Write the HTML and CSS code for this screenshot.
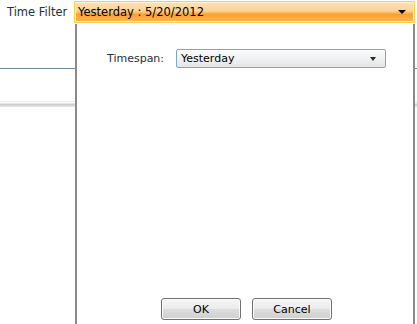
FILE: index.html
```html
<!DOCTYPE html>
<html lang="en">
<head>
    <meta charset="UTF-8">
    <title>Time Filter</title>
    <link rel="stylesheet" href="styles.css">
</head>
<body>
    <div class="topbar">
        <div class="label">Time Filter</div>
        <div class="filter-combo">
            <span>Yesterday : 5/20/2012</span>
            <span class="arrow"></span>
        </div>
    </div>

    <div class="backdrop">
        <div class="rule"></div>
        <div class="splitter"></div>
    </div>

    <!-- dropdown panel -->
    <div class="popup">
        <div class="form-row">
            <span class="form-label">Timespan:</span>
            <div class="combo">
                <span>Yesterday</span>
                <span class="arrow small"></span>
            </div>
        </div>
        <div class="button-group">
            <button class="btn">OK</button>
            <button class="btn">Cancel</button>
        </div>
    </div>
</body>
</html>
```

FILE: styles.css
```css
body {
    margin: 0;
    font-family: "DejaVu Sans", "Liberation Sans", sans-serif;
    font-size: 11px;
    color: #1e1e1e;
    background: #fff;
    height: 324px;
    overflow: hidden;
    position: relative;
}
.topbar {
    display: flex;
    align-items: center;
    height: 24px;
}
.label {
    width: 74px;
    padding-left: 7px;
    box-sizing: border-box;
    color: #1e3140;
    font-size: 11.5px;
}
.filter-combo {
    width: 341px;
    height: 22px;
    box-sizing: border-box;
    border: 1px solid #f9cf4c;
    box-shadow: inset 0 0 0 1px #fff3cf;
    background: linear-gradient(to bottom, #fee2b8 0%, #fdd296 45%, #f8a22c 62%, #fbb555 100%);
    display: flex;
    align-items: center;
    justify-content: space-between;
    padding: 0 8px 0 3px;
    color: #000;
    font-size: 11.5px;
}
.arrow {
    width: 0;
    height: 0;
    border-left: 4px solid transparent;
    border-right: 4px solid transparent;
    border-top: 4px solid #000;
}
.arrow.small {
    border-left-width: 3.5px;
    border-right-width: 3.5px;
    border-top-color: #2a2a2a;
}
.backdrop {
    padding-top: 44px;
}
.rule {
    height: 1px;
    background: #6f8696;
}
.splitter {
    margin-top: 32px;
    height: 6px;
    background: linear-gradient(to bottom, #d5d5d5 0, #fff 1px, #fff 2px, #c9c9c9 3px, #e9e9e9 6px);
}
.popup {
    position: absolute;
    left: 75px;
    top: 24px;
    width: 340px;
    bottom: -2px;
    box-sizing: border-box;
    background: #fff;
    border: 2px solid #8b8b8b;
    border-top: none;
    display: flex;
    flex-direction: column;
}
.form-row {
    display: flex;
    align-items: center;
    margin-top: 25px;
    padding-left: 30px;
}
.form-label {
    width: 69px;
    color: #1e3140;
}
.combo {
    width: 210px;
    height: 19px;
    box-sizing: border-box;
    border: 1px solid #7ea9bd;
    border-radius: 2px;
    background: linear-gradient(to bottom, #fbfbfb 0%, #f1f2f3 50%, #e2e5e7 100%);
    display: flex;
    align-items: center;
    justify-content: space-between;
    padding: 0 9px 0 4px;
    color: #000;
}
.button-group {
    margin-top: auto;
    margin-bottom: 4px;
    display: flex;
    justify-content: center;
    gap: 11px;
    padding-left: 3px;
}
.btn {
    width: 80px;
    height: 22px;
    border: 1px solid #707070;
    border-radius: 3px;
    background: linear-gradient(to bottom, #f6f6f6 0%, #ebebeb 50%, #dddddd 51%, #cfcfcf 100%);
    box-shadow: inset 0 0 0 1px #fbfbfb;
    font-family: "DejaVu Sans", "Liberation Sans", sans-serif;
    font-size: 11px;
    color: #000;
    padding: 0;
}
```
